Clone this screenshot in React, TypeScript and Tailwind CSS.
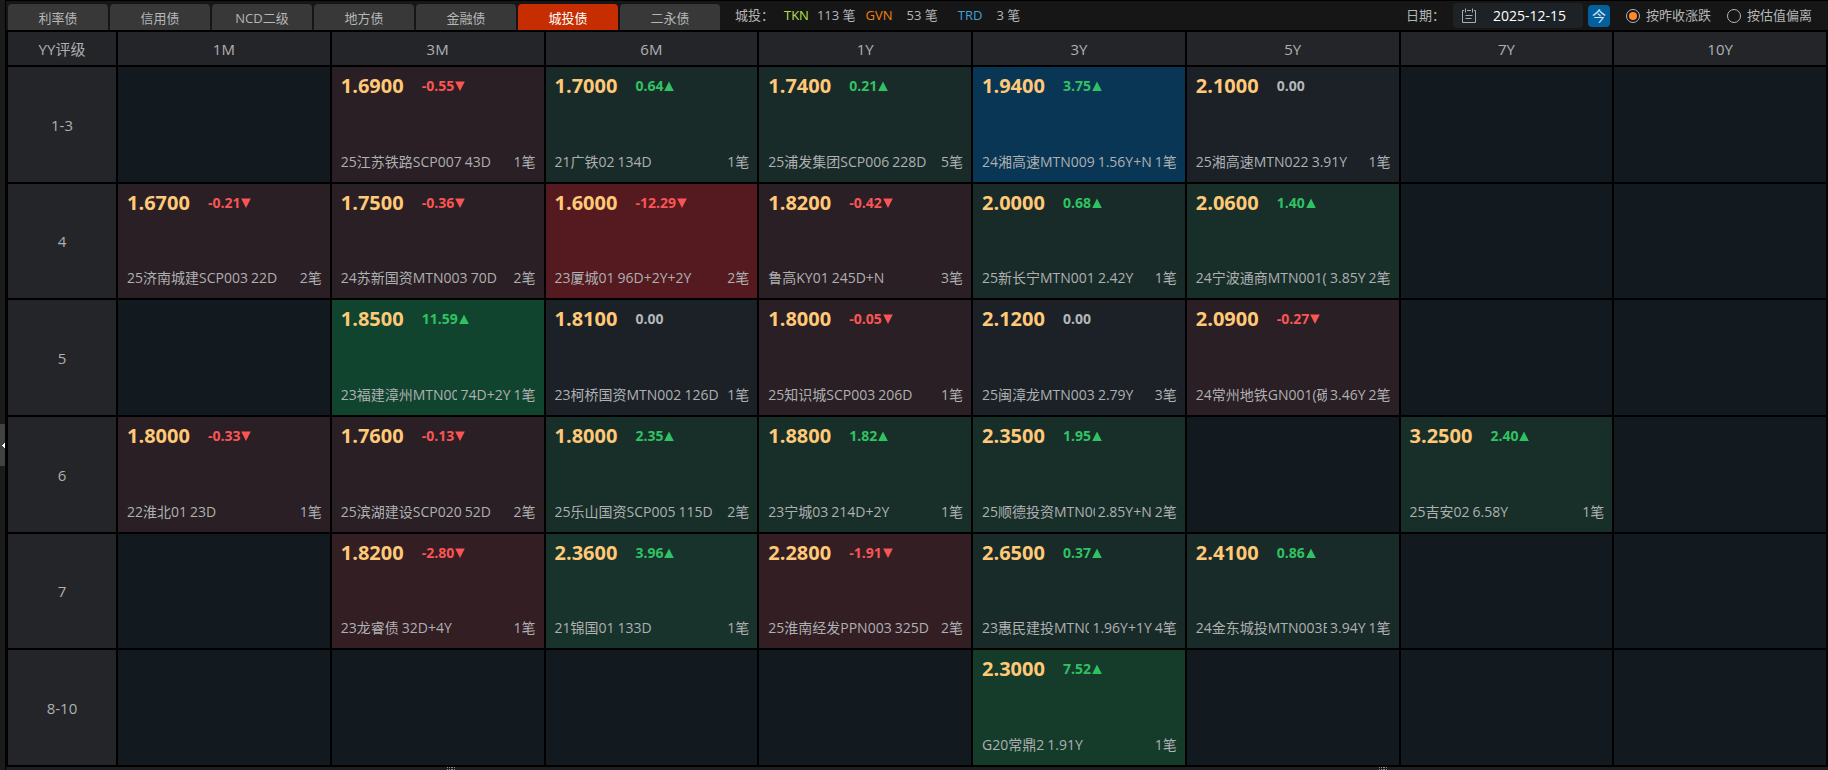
type Quote = {
  price: string
  change: number
  name: string
  term: string
  count: number
  bg: string
}

type Row = { rating: string; cells: (Quote | null)[] }

const TABS = ['利率债', '信用债', 'NCD二级', '地方债', '金融债', '城投债', '二永债']
const TERMS = ['1M', '3M', '6M', '1Y', '3Y', '5Y', '7Y', '10Y']

const RED_1 = 'bg-[#2a1f24]'
const RED_2 = 'bg-[#331e24]'
const RED_3 = 'bg-[#541a20]'
const GREEN_1 = 'bg-[#192b28]'
const GREEN_2 = 'bg-[#182f29]'
const GREEN_3 = 'bg-[#17332b]'
const GREEN_4 = 'bg-[#153b2b]'
const GREEN_5 = 'bg-[#11442e]'
const FLAT = 'bg-[#1b2127]'
const BLUE = 'bg-[#093654]'

const q = (price: string, change: number, name: string, term: string, count: number, bg: string): Quote => ({
  price,
  change,
  name,
  term,
  count,
  bg,
})

const ROWS: Row[] = [
  {
    rating: '1-3',
    cells: [
      null,
      q('1.6900', -0.55, '25江苏铁路SCP007', '43D', 1, RED_1),
      q('1.7000', 0.64, '21广铁02', '134D', 1, GREEN_1),
      q('1.7400', 0.21, '25浦发集团SCP006', '228D', 5, GREEN_1),
      q('1.9400', 3.75, '24湘高速MTN009', '1.56Y+N', 1, BLUE),
      q('2.1000', 0, '25湘高速MTN022', '3.91Y', 1, FLAT),
      null,
      null,
    ],
  },
  {
    rating: '4',
    cells: [
      q('1.6700', -0.21, '25济南城建SCP003', '22D', 2, RED_1),
      q('1.7500', -0.36, '24苏新国资MTN003', '70D', 2, RED_1),
      q('1.6000', -12.29, '23厦城01', '96D+2Y+2Y', 2, RED_3),
      q('1.8200', -0.42, '鲁高KY01', '245D+N', 3, RED_1),
      q('2.0000', 0.68, '25新长宁MTN001', '2.42Y', 1, GREEN_1),
      q('2.0600', 1.4, '24宁波通商MTN001(科', '3.85Y', 2, GREEN_2),
      null,
      null,
    ],
  },
  {
    rating: '5',
    cells: [
      null,
      q('1.8500', 11.59, '23福建漳州MTN002', '74D+2Y', 1, GREEN_5),
      q('1.8100', 0, '23柯桥国资MTN002', '126D', 1, FLAT),
      q('1.8000', -0.05, '25知识城SCP003', '206D', 1, RED_1),
      q('2.1200', 0, '25闽漳龙MTN003', '2.79Y', 3, FLAT),
      q('2.0900', -0.27, '24常州地铁GN001(碳', '3.46Y', 2, RED_1),
      null,
      null,
    ],
  },
  {
    rating: '6',
    cells: [
      q('1.8000', -0.33, '22淮北01', '23D', 1, RED_1),
      q('1.7600', -0.13, '25滨湖建设SCP020', '52D', 2, RED_1),
      q('1.8000', 2.35, '25乐山国资SCP005', '115D', 2, GREEN_2),
      q('1.8800', 1.82, '23宁城03', '214D+2Y', 1, GREEN_2),
      q('2.3500', 1.95, '25顺德投资MTN001', '2.85Y+N', 2, GREEN_2),
      null,
      q('3.2500', 2.4, '25吉安02', '6.58Y', 1, GREEN_2),
      null,
    ],
  },
  {
    rating: '7',
    cells: [
      null,
      q('1.8200', -2.8, '23龙睿债', '32D+4Y', 1, RED_2),
      q('2.3600', 3.96, '21锦国01', '133D', 1, GREEN_3),
      q('2.2800', -1.91, '25淮南经发PPN003', '325D', 2, RED_2),
      q('2.6500', 0.37, '23惠民建投MTN001', '1.96Y+1Y', 4, GREEN_1),
      q('2.4100', 0.86, '24金东城投MTN003B', '3.94Y', 1, GREEN_1),
      null,
      null,
    ],
  },
  {
    rating: '8-10',
    cells: [null, null, null, null, q('2.3000', 7.52, 'G20常鼎2', '1.91Y', 1, GREEN_4), null, null, null],
  },
]

function Change({ value }: { value: number }) {
  if (value === 0) return <span className="text-[#b4b6b8]">0.00</span>
  const up = value > 0
  return (
    <span className={`flex items-center gap-px ${up ? 'text-[#2fc263]' : 'text-[#f95555]'}`}>
      {value.toFixed(2)}
      <svg className="size-2.5" viewBox="0 0 10 10" fill="currentColor" aria-hidden="true">
        {up ? <path d="M5 0.5 9.8 10H0.2z" /> : <path d="M0.2 0.5H9.8L5 10z" />}
      </svg>
    </span>
  )
}

function QuoteCell({ quote }: { quote: Quote | null }) {
  if (!quote) return <td className="bg-[#121a1f]" />
  return (
    <td className={`h-px p-0 ${quote.bg}`}>
      <div className="flex h-full flex-col justify-between pt-[5px] pr-2 pb-2.5 pl-[9px]">
        <div className="flex items-center gap-[18px] text-sm font-bold">
          <span className="text-xl leading-7 text-[#ffc978]">{quote.price}</span>
          <Change value={quote.change} />
        </div>
        <div className="flex gap-[3px] text-sm leading-5 whitespace-nowrap text-[#aeb0b2]">
          <span className="min-w-0 overflow-hidden">{quote.name}</span>
          <span>{quote.term}</span>
          <span className="ml-auto">{quote.count}笔</span>
        </div>
      </div>
    </td>
  )
}

function CalendarIcon() {
  return (
    <svg className="size-4" viewBox="0 0 16 16" fill="none" stroke="#a9abad" aria-hidden="true">
      <path d="M3 2.5H1.5v12h13v-12H13M6 2.5h4" />
      <path d="M4.5 0.5v4M11.5 0.5v4M4.5 7.5h7M4.5 10.5h6" />
    </svg>
  )
}

function Grip() {
  return (
    <svg className="h-[3px] w-2" viewBox="0 0 8 3" fill="#8a8a8a" aria-hidden="true">
      <path d="M0 0h1v1H0zM2 0h1v1H2zM4 0h2v1H4zM7 0h1v1H7zM0 2h1v1H0zM2 2h1v1H2zM4 2h2v1H4zM7 2h1v1H7z" />
    </svg>
  )
}

const RADIO =
  'size-3.5 appearance-none rounded-full border border-[#b4b6b8] bg-clip-content p-0.5 checked:bg-[#ff8a2b]'

function Toolbar() {
  return (
    <header className="flex h-[30px] shrink-0 items-center border-t border-black bg-[#161616] pl-0.5 text-[13px] text-[#b4b6b8]">
      <nav className="flex gap-0.5 self-end">
        {TABS.map((tab) => (
          <button
            key={tab}
            className={`h-[26px] w-[100px] rounded-t pt-0.5 leading-5 ${
              tab === '城投债' ? 'bg-[#c62e02] text-white' : 'bg-[#373837]'
            }`}
          >
            {tab}
          </button>
        ))}
      </nav>
      <div className="ml-[15px] flex items-center whitespace-pre">
        <span className="w-[49px]">城投：</span>
        <span className="text-[#b5e04a]">TKN</span>
        <span className="ml-2">113 笔</span>
        <span className="ml-2.5 text-[#f08213]">GVN</span>
        <span className="ml-3.5">53 笔</span>
        <span className="ml-5 text-[#459fdc]">TRD</span>
        <span className="ml-3.5">3 笔</span>
      </div>
      <div className="ml-auto flex items-center pr-4">
        <label htmlFor="date">日期：</label>
        <div className="ml-2 flex h-[25px] w-[130px] items-center rounded bg-[#1d2226] pl-2">
          <CalendarIcon />
          <input id="date" defaultValue="2025-12-15" className="ml-4 w-[84px] bg-transparent text-sm text-white outline-none" />
        </div>
        <button className="ml-[5px] size-[22px] rounded bg-[#03609f] text-sm text-[#d5e6f2]">今</button>
        <label className="ml-4 flex items-center gap-1.5">
          <input type="radio" name="basis" defaultChecked className={RADIO} />
          按昨收涨跌
        </label>
        <label className="ml-4 flex items-center gap-1.5">
          <input type="radio" name="basis" className={RADIO} />
          按估值偏离
        </label>
      </div>
    </header>
  )
}

export default function App() {
  return (
    <div className="flex h-screen overflow-hidden bg-black font-['Open_Sans','Noto_Sans_CJK_SC',sans-serif]">
      {/* Collapsed side panel */}
      <aside className="flex w-[5px] shrink-0 flex-col justify-center bg-[#1b1b1b] pt-[120px]">
        <button aria-label="展开" className="flex h-[42px] items-center justify-end bg-[#414141]">
          <svg className="h-[5px] w-[3px]" viewBox="0 0 3 5" fill="#fff" aria-hidden="true">
            <path d="M0 2h1V1h1V0h1v5H2V4H1V3H0z" />
          </svg>
        </button>
      </aside>
      <div className="ml-px flex min-w-0 grow flex-col">
        <Toolbar />
        <main className="min-h-0 grow">
          <table className="h-full w-full table-fixed border-separate border-spacing-0.5 text-[15px] text-[#aeb0b2]">
            <thead>
              <tr className="h-[33px] bg-[#242528]">
                <th className="w-[108px] p-0 pt-px font-normal">YY评级</th>
                {TERMS.map((term) => (
                  <th key={term} className="p-0 pt-px font-normal">
                    {term}
                  </th>
                ))}
              </tr>
            </thead>
            <tbody>
              {ROWS.map((row) => (
                <tr key={row.rating}>
                  <th className="bg-[#242528] p-0 pt-px font-normal">{row.rating}</th>
                  {row.cells.map((quote, i) => (
                    <QuoteCell key={TERMS[i]} quote={quote} />
                  ))}
                </tr>
              ))}
            </tbody>
          </table>
        </main>
        <footer className="flex h-[3px] shrink-0 justify-between bg-[#1e1e1f] px-[24.2%]">
          <Grip />
          <Grip />
        </footer>
      </div>
    </div>
  )
}
